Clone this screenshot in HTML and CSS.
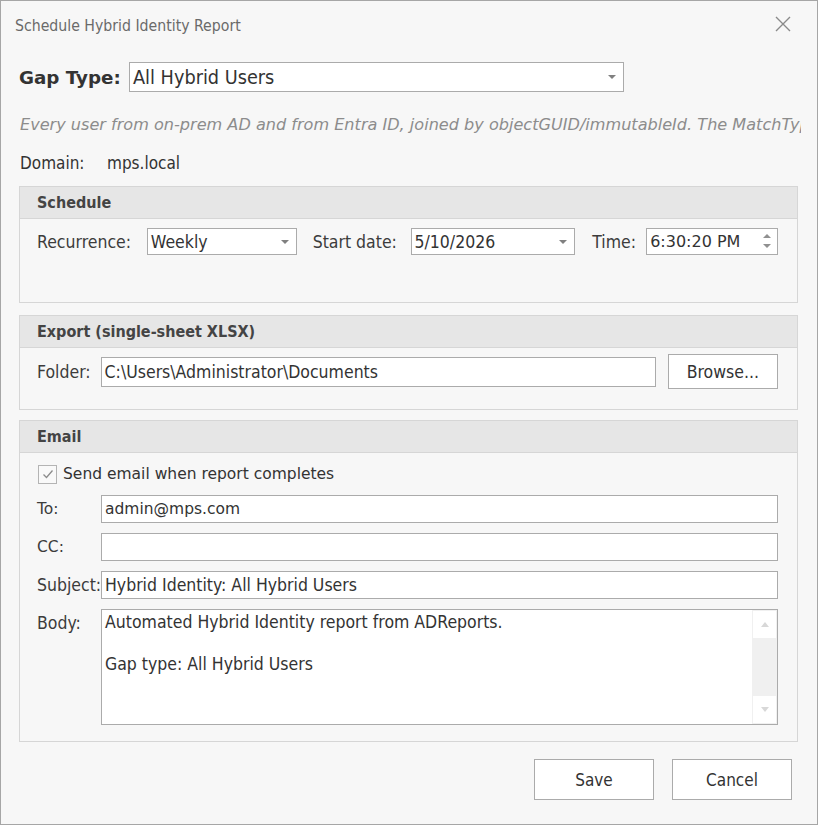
FILE: index.html
```html
<!DOCTYPE html>
<html lang="en">
<head>
  <meta charset="UTF-8" />
  <meta name="viewport" content="width=device-width, initial-scale=1.0" />
  <title>Schedule Hybrid Identity Report</title>
  <link rel="stylesheet" href="styles.css">
</head>
<body>
  <div class="window">
    <div class="titlebar">
      <span class="title">Schedule Hybrid Identity Report</span>
      <svg class="close" width="16" height="16" viewBox="0 0 16 16">
        <path d="M1 1 L15 15 M15 1 L1 15" stroke="#8a8a8a" stroke-width="1.4" fill="none" />
      </svg>
    </div>

    <div class="content">
      <div class="gap-row">
        <span class="gap-label">Gap Type:</span>
        <div class="combo combo-gap">
          <span>All Hybrid Users</span>
          <span class="arrow"></span>
        </div>
      </div>

      <div class="desc">Every user from on-prem AD and from Entra ID, joined by objectGUID/immutableId. The MatchType column shows how each pair was matched.</div>

      <div class="domain-row">
        <span class="domain-label">Domain:</span>
        <span>mps.local</span>
      </div>

      <div class="group group-schedule">
        <div class="group-head">Schedule</div>
        <div class="group-body">
          <div class="sched-row">
            <span class="lbl">Recurrence:</span>
            <div class="combo combo-rec"><span>Weekly</span><span class="arrow"></span></div>
            <span class="lbl lbl-start">Start date:</span>
            <div class="combo combo-date"><span>5/10/2026</span><span class="arrow"></span></div>
            <span class="lbl lbl-time">Time:</span>
            <div class="combo combo-time">
              <span class="time-text">6:30:20 PM</span>
              <span class="spin"><span class="up"></span><span class="down"></span></span>
            </div>
          </div>
        </div>
      </div>

      <div class="group group-export">
        <div class="group-head">Export (single-sheet XLSX)</div>
        <div class="group-body">
          <div class="export-row">
            <span class="lbl lbl-folder">Folder:</span>
            <div class="input input-folder">C:\Users\Administrator\Documents</div>
            <button class="btn btn-browse">Browse...</button>
          </div>
        </div>
      </div>

      <div class="group group-email">
        <div class="group-head">Email</div>
        <div class="group-body">
          <div class="check-row">
            <span class="check">
              <svg width="12" height="10" viewBox="0 0 12 10"><path d="M1.5 5.5 L4.5 8.5 L10.5 1.5" stroke="#8c8c8c" stroke-width="1.3" fill="none" /></svg>
            </span>
            <span class="check-text">Send email when report completes</span>
          </div>
          <div class="field">
            <span class="flbl flbl-tahoma">To:</span>
            <div class="input input-mail">admin@mps.com</div>
          </div>
          <div class="field">
            <span class="flbl flbl-tahoma">CC:</span>
            <div class="input input-mail"></div>
          </div>
          <div class="field">
            <span class="flbl">Subject:</span>
            <div class="input">Hybrid Identity: All Hybrid Users</div>
          </div>
          <div class="field field-body">
            <span class="flbl flbl-body">Body:</span>
            <div class="textarea">
              <div class="textarea-text">Automated Hybrid Identity report from ADReports.<br><br>Gap type: All Hybrid Users</div>
              <div class="scrollbar">
                <span class="sb-btn"><span class="sb-up"></span></span>
                <span class="sb-btn"><span class="sb-down"></span></span>
              </div>
            </div>
          </div>
        </div>
      </div>

      <div class="footer">
        <button class="btn btn-foot">Save</button>
        <button class="btn btn-foot">Cancel</button>
      </div>
    </div>
  </div>
</body>
</html>
```

FILE: styles.css
```css
* {
  box-sizing: border-box;
}
body {
  margin: 0;
  background: #f7f7f7;
  font-family: 'DejaVu Sans Condensed', 'DejaVu Sans', sans-serif;
  font-size: 17.5px;
  color: #3c3c3c;
}
.window {
  width: 818px;
  height: 825px;
  border: 1px solid #a6a6a6;
  background: #f7f7f7;
  overflow: hidden;
}
.titlebar {
  height: 46px;
  display: flex;
  align-items: center;
  justify-content: space-between;
  padding: 3px 26px 0 14px;
}
.title {
  font-size: 15.7px;
  color: #6a6a6a;
}
.close {
  margin-top: -4px;
}
.content {
  padding: 0 19px 0 18px;
}

/* gap type */
.gap-row {
  display: flex;
  align-items: center;
  margin-top: 15px;
  height: 30px;
}
.gap-label {
  font-family: 'DejaVu Sans', sans-serif;
  font-weight: bold;
  font-size: 18.3px;
  color: #333;
  width: 110px;
}
.combo {
  position: relative;
  display: flex;
  align-items: center;
  background: #fff;
  border: 1px solid #ababab;
  padding-left: 3px;
  color: #333;
}
.combo-gap {
  width: 495px;
  height: 30px;
  font-size: 19.7px;
}
.arrow {
  position: absolute;
  right: 7px;
  top: 50%;
  margin-top: -2px;
  border-left: 4px solid transparent;
  border-right: 4px solid transparent;
  border-top: 4px solid #808080;
}
.desc {
  margin-top: 23px;
  font-family: 'DejaVu Sans', sans-serif;
  font-style: italic;
  font-size: 16.1px;
  color: #8c8c8c;
  white-space: nowrap;
  overflow: hidden;
  width: 781px;
  margin-left: 1px;
}
.domain-row {
  margin-top: 19px;
  margin-left: 1px;
  display: flex;
  font-size: 17px;
  color: #333;
}
.domain-label {
  width: 87px;
}

/* groups */
.group {
  border: 1px solid #d6d6d6;
}
.group-head {
  height: 32px;
  background: #e6e6e6;
  border-bottom: 1px solid #d6d6d6;
  display: flex;
  align-items: center;
  padding-left: 17px;
  font-weight: bold;
  font-size: 16px;
  color: #444;
}
.group-body {
  padding: 0 19px 0 17px;
}
.group-schedule {
  margin-top: 13px;
  height: 117px;
}
.group-export {
  margin-top: 12px;
  height: 95px;
}
.group-email {
  margin-top: 10px;
  height: 322px;
}
.lbl {
  color: #3c3c3c;
}

/* schedule row */
.sched-row {
  display: flex;
  align-items: center;
  margin-top: 9px;
  height: 27px;
}
.sched-row .combo {
  height: 27px;
}
.sched-row .lbl {
  width: 110px;
}
.combo-rec {
  width: 150px;
}
.sched-row .lbl-start {
  width: 98px;
  margin-left: 16px;
}
.combo-date {
  width: 165px;
}
.sched-row .lbl-time {
  width: 54px;
  margin-left: 17px;
}
.combo-time {
  width: 132px;
  font-family: 'DejaVu Sans', sans-serif;
  font-size: 16px;
}
.spin {
  position: absolute;
  right: 6px;
  top: 5px;
  display: flex;
  flex-direction: column;
  gap: 6px;
}
.up {
  border-left: 4px solid transparent;
  border-right: 4px solid transparent;
  border-bottom: 4px solid #909090;
}
.down {
  border-left: 4px solid transparent;
  border-right: 4px solid transparent;
  border-top: 4px solid #909090;
}

/* export row */
.export-row {
  display: flex;
  align-items: center;
  margin-top: 6px;
  height: 35px;
}
.lbl-folder {
  width: 64px;
}
.input {
  display: flex;
  align-items: center;
  background: #fff;
  border: 1px solid #ababab;
  padding-left: 3px;
  height: 28px;
  flex: 1;
  color: #333;
}
.input-folder {
  height: 30px;
  flex: none;
  width: 555px;
}
.btn {
  background: #fff;
  border: 1px solid #ababab;
  font-family: 'DejaVu Sans Condensed', 'DejaVu Sans', sans-serif;
  font-size: 17.5px;
  color: #333;
}
.btn-browse {
  margin-left: 12px;
  width: 111px;
  height: 35px;
}

/* email */
.check-row {
  display: flex;
  align-items: center;
  height: 22px;
  margin-top: 10px;
}
.check {
  width: 19px;
  height: 19px;
  border: 1px solid #b4b4b4;
  background: #f9f9f9;
  display: flex;
  align-items: center;
  justify-content: center;
  margin-left: 1px;
}
.check-text {
  margin-left: 6px;
  font-family: 'DejaVu Sans', sans-serif;
  font-size: 15.5px;
  color: #333;
}
.field {
  display: flex;
  align-items: center;
  margin-top: 10px;
}
.check-row + .field {
  margin-top: 10px;
}
.flbl {
  width: 64px;
  flex: none;
  color: #3c3c3c;
  white-space: nowrap;
}
.flbl-tahoma {
  font-family: 'DejaVu Sans', sans-serif;
  font-size: 15.5px;
}
.input-mail {
  font-family: 'DejaVu Sans', sans-serif;
  font-size: 15.5px;
}
.field-body {
  align-items: flex-start;
}
.flbl-body {
  margin-top: 4px;
}
.textarea {
  flex: 1;
  height: 116px;
  background: #fff;
  border: 1px solid #ababab;
  display: flex;
}
.textarea-text {
  flex: 1;
  padding: 2px 0 0 3px;
  line-height: 21px;
  color: #333;
}
.scrollbar {
  width: 25px;
  background: #f0f0f0;
  display: flex;
  flex-direction: column;
  justify-content: space-between;
  padding: 1px;
}
.sb-btn {
  height: 27px;
  background: #fff;
  display: flex;
  align-items: center;
  justify-content: center;
}
.sb-up {
  border-left: 4px solid transparent;
  border-right: 4px solid transparent;
  border-bottom: 5px solid #d8d8d8;
}
.sb-down {
  border-left: 4px solid transparent;
  border-right: 4px solid transparent;
  border-top: 5px solid #d8d8d8;
}

/* footer */
.footer {
  display: flex;
  justify-content: flex-end;
  gap: 18px;
  margin-top: 17px;
  margin-right: 6px;
}
.btn-foot {
  width: 120px;
  height: 41px;
  font-size: 17px;
}
```
